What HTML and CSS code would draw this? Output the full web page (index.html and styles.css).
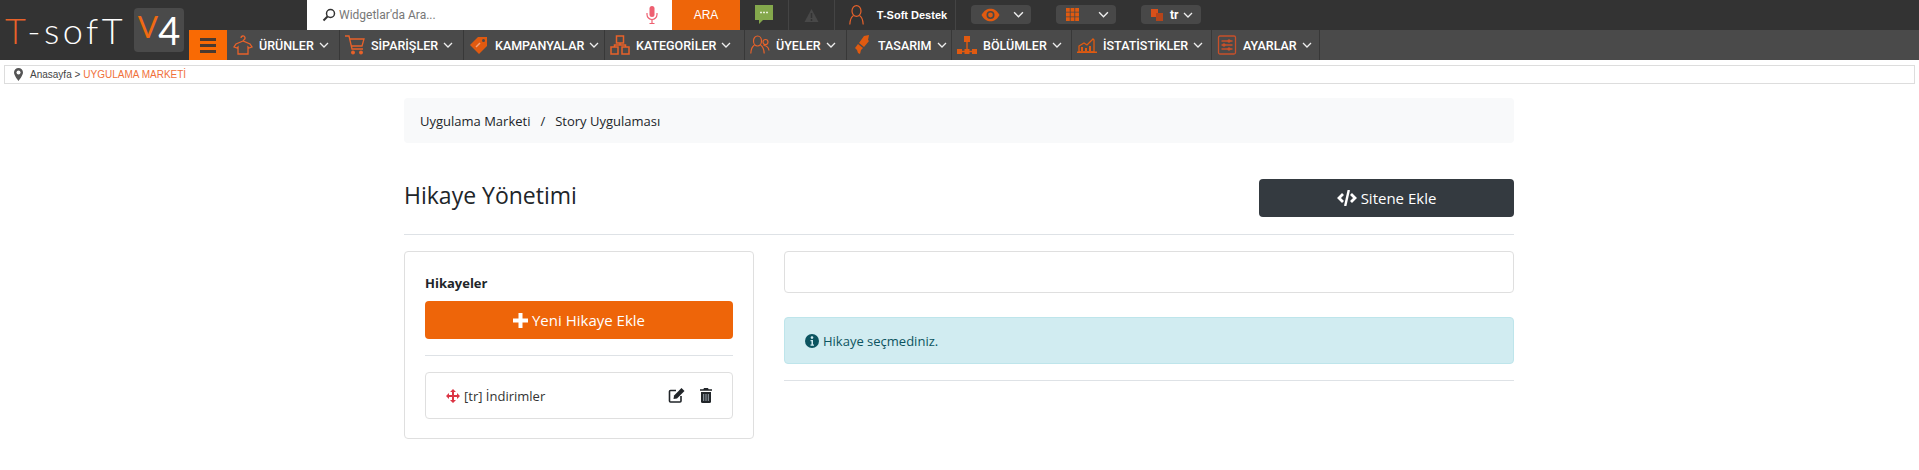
FILE: index.html
```html
<!DOCTYPE html>
<html lang="en">
<head>
  <meta charset="UTF-8" />
  <title>T-Soft V4 - Hikaye Yönetimi</title>
  <link rel="stylesheet" href="styles.css">
</head>
<body>
  <header class="header">
    <div class="logo">
      <div class="logo-text"><span class="logo-t">T</span>-sofT</div>
      <div class="logo-box"><span class="logo-v">V</span><span class="logo-4">4</span></div>
    </div>
    <div class="header-right">
      <div class="top-bar">
        <div class="search">
          <svg class="search-icon" viewBox="0 0 14 14"><circle cx="8.5" cy="5.5" r="4" fill="none" stroke="#333" stroke-width="1.5"/><path d="M5.5 8.5L1.5 12.5" stroke="#333" stroke-width="2"/></svg>
          <span class="search-text">Widgetlar'da Ara...</span>
          <svg class="mic" viewBox="0 0 12 18"><rect x="3.5" y="0" width="5" height="11" rx="2.5" fill="#ee5f70"/><path d="M1 7v1.5a5 5 0 0 0 10 0V7M6 13.5V18M3.500 17.500h5" fill="none" stroke="#ee5f70" stroke-width="1.2"/></svg>
        </div>
        <div class="search-btn">ARA</div>
        <div class="top-cell chat">
          <svg width="18" height="20" viewBox="0 0 18 20"><path d="M0 0h18v15H8l-4 4v-4H0z" fill="#84a84c"/><path d="M5 7.500h2M8 7.500h2M11 7.500h2" stroke="#e8f0d8" stroke-width="1.6"/></svg>
        </div>
        <div class="top-cell alert-cell">
          <svg width="15" height="15" viewBox="0 0 15 15"><path d="M7.500 1L14.500 14H.5z" fill="#484848"/><path d="M7.500 5v5M7.500 11v2" stroke="#333" stroke-width="1.5"/></svg>
        </div>
        <div class="top-cell support">
          <svg width="15" height="20" viewBox="0 0 15 20" fill="none" stroke="#e8622a" stroke-width="1.2"><ellipse cx="7.500" cy="6" rx="4.500" ry="5.400"/><path d="M4.500 10.500C2 12 1 15 .8 19.500M10.500 10.500C13 12 14 15 14.200 19.500"/></svg>
          <span>T-Soft Destek</span>
        </div>
        <div class="pills">
          <div class="pill">
            <svg width="19" height="14" viewBox="0 0 19 14"><path d="M.5 7C3 2.500 6 .7 9.500.7S16 2.500 18.500 7C16 11.500 13 13.300 9.500 13.300S3 11.500 .5 7z" fill="#e05a10"/><circle cx="9.500" cy="7" r="4" fill="#484848"/><circle cx="9.500" cy="7" r="2.400" fill="#e05a10"/></svg>
            <svg class="chev chev-pill" viewBox="0 0 10 6"><path d="M1 1l4 4 4-4"/></svg>
          </div>
          <div class="pill">
            <svg width="13" height="13" viewBox="0 0 13 13" fill="#e05a10"><path d="M0 0h3.800v3.800H0zM4.600 0h3.800v3.800H4.600zM9.200 0H13v3.800H9.200zM0 4.600h3.800v3.800H0zM4.600 4.600h3.800v3.800H4.600zM9.200 4.600H13v3.800H9.200zM0 9.200h3.800V13H0zM4.600 9.200h3.800V13H4.600zM9.200 9.200H13V13H9.200z"/></svg>
            <svg class="chev chev-pill" viewBox="0 0 10 6"><path d="M1 1l4 4 4-4"/></svg>
          </div>
          <div class="pill pill-lang">
            <svg width="12" height="12" viewBox="0 0 12 12"><rect x="0" y="0" width="7" height="8" fill="#d8501a"/><rect x="5" y="4" width="7" height="8" fill="#b4441a"/></svg>
            <span class="lang">tr</span>
            <svg class="chev chev-lang" viewBox="0 0 10 6"><path d="M1 1l4 4 4-4"/></svg>
          </div>
        </div>
      </div>

      <nav class="menu">
        <div class="menu-toggle"><span></span><span></span><span></span></div>
        <a class="menu-item" href="#">
          <svg class="menu-icon" viewBox="0 0 20 20" fill="none" stroke="#e8622a" stroke-width="1.3"><path d="M8 3a2 2 0 1 1 3 1.700L10 6M10 6L3 9l-2 3 3 1 1-1v7h10v-7l1 1 3-1-2-3z"/></svg>
          <span>ÜRÜNLER</span><svg class="chev" viewBox="0 0 10 6"><path d="M1 1l4 4 4-4"/></svg>
        </a>
        <a class="menu-item" href="#">
          <svg class="menu-icon" viewBox="0 0 20 20" fill="none" stroke="#e8622a" stroke-width="1.3"><path d="M0 1h4l3 13h11M5 4h14l-2 7H6.500"/><circle cx="8" cy="17.500" r="1.300" fill="#e8622a"/><circle cx="16" cy="17.500" r="1.300" fill="#e8622a"/></svg>
          <span>SİPARİŞLER</span><svg class="chev" viewBox="0 0 10 6"><path d="M1 1l4 4 4-4"/></svg>
        </a>
        <a class="menu-item" href="#">
          <svg class="menu-icon" viewBox="0 0 20 20"><path d="M9 2h9v9l-8 8-9-9z" fill="#e05a10"/><circle cx="14.500" cy="5.500" r="1.500" fill="#4a4a4a"/><path d="M7 12l4-4" stroke="#f3a37a" stroke-width="1.500"/></svg>
          <span>KAMPANYALAR</span><svg class="chev" viewBox="0 0 10 6"><path d="M1 1l4 4 4-4"/></svg>
        </a>
        <a class="menu-item" href="#">
          <svg class="menu-icon" viewBox="0 0 20 20" fill="none" stroke="#e8622a" stroke-width="1.500"><rect x="6.500" y="1" width="7" height="7"/><rect x="1" y="12" width="7" height="7"/><rect x="12" y="12" width="7" height="7"/><path d="M10 8v2M4.500 12v-2h11v2"/></svg>
          <span>KATEGORİLER</span><svg class="chev" viewBox="0 0 10 6"><path d="M1 1l4 4 4-4"/></svg>
        </a>
        <a class="menu-item" href="#">
          <svg class="menu-icon" viewBox="0 0 20 20" fill="none" stroke="#e8622a" stroke-width="1.200"><ellipse cx="7.500" cy="6" rx="4" ry="5"/><path d="M4.500 10C2 11.500 1 14.500 .8 18.500M10.500 10C13 11.500 14 14.500 14.200 18.500"/><circle cx="15.500" cy="7" r="2.500"/><path d="M13.500 10.500c3 0 5 2 5.500 5"/></svg>
          <span>ÜYELER</span><svg class="chev" viewBox="0 0 10 6"><path d="M1 1l4 4 4-4"/></svg>
        </a>
        <a class="menu-item" href="#">
          <svg class="menu-icon" viewBox="0 0 20 20"><path d="M12 1l5-1-1 5 1 1-5 6-5-4z" fill="#e05a10"/><path d="M6 9l5 4-2 2-1 4-2-1-1-3-2-2z" fill="#e05a10"/></svg>
          <span>TASARIM</span><svg class="chev" viewBox="0 0 10 6"><path d="M1 1l4 4 4-4"/></svg>
        </a>
        <a class="menu-item" href="#">
          <svg class="menu-icon" viewBox="0 0 20 20" fill="#e05a10"><rect x="7" y="1" width="6" height="6"/><rect x="0" y="14" width="5" height="5"/><rect x="7.500" y="14" width="5" height="5"/><rect x="15" y="14" width="5" height="5"/><path d="M9.300 7h1.400v9H9.300zM3 15.800h14v1.400H3z"/></svg>
          <span>BÖLÜMLER</span><svg class="chev" viewBox="0 0 10 6"><path d="M1 1l4 4 4-4"/></svg>
        </a>
        <a class="menu-item" href="#">
          <svg class="menu-icon" viewBox="0 0 20 20"><path d="M2 11l5-3 3 2 6-6 1 1v12H2z" fill="none" stroke="#e05a10" stroke-width="1.300"/><path d="M4 12h2v4H4zM8 13h2v3H8zM12 11h2v5h-2z" fill="#e05a10"/><path d="M0 16.500h20V18H0z" fill="#e05a10"/></svg>
          <span>İSTATİSTİKLER</span><svg class="chev" viewBox="0 0 10 6"><path d="M1 1l4 4 4-4"/></svg>
        </a>
        <a class="menu-item" href="#">
          <svg class="menu-icon" viewBox="0 0 20 20" fill="none" stroke="#c8502a" stroke-width="1.300"><rect x="1.500" y="1" width="17" height="18" rx="1.500"/><path d="M4.500 6h11M4.500 10h11M4.500 14h11"/><circle cx="12" cy="6" r="1" fill="#c8502a"/><circle cx="7" cy="10" r="1" fill="#c8502a"/><circle cx="12" cy="14" r="1" fill="#c8502a"/></svg>
          <span>AYARLAR</span><svg class="chev" viewBox="0 0 10 6"><path d="M1 1l4 4 4-4"/></svg>
        </a>
      </nav>
    </div>
  </header>

  <div class="crumb-bar">
    <svg width="9" height="13" viewBox="0 0 9 13"><path d="M4.500 0A4.500 4.500 0 0 0 0 4.500C0 7.500 4.500 13 4.500 13S9 7.500 9 4.500A4.500 4.500 0 0 0 4.500 0z" fill="#555"/><circle cx="4.500" cy="4.500" r="2" fill="#fff"/></svg>
    <span class="crumb-home">Anasayfa &gt;</span>
    <span class="crumb-current">UYGULAMA MARKETİ</span>
  </div>

  <main class="container">
    <div class="breadcrumb">
      <a href="#">Uygulama Marketi</a><span class="sep">/</span><a href="#">Story Uygulaması</a>
    </div>

    <div class="page-head">
      <h1>Hikaye Yönetimi</h1>
      <button class="btn btn-dark">
        <svg width="20" height="16" viewBox="0 0 20 16" fill="none" stroke="#fff"><path d="M11.800 0L8.200 16" stroke-width="2.400"/><path d="M6 4L2 8l4 4M14 4l4 4-4 4" stroke-width="2.800"/></svg>
        Sitene Ekle
      </button>
    </div>

    <div class="columns">
      <section class="card stories">
        <div class="card-title">Hikayeler</div>
        <button class="btn btn-orange">
          <svg width="15" height="15" viewBox="0 0 15 15" fill="#fff"><path d="M5.500 0h4v5.500H15v4H9.500V15h-4V9.500H0v-4h5.500z"/></svg>
          Yeni Hikaye Ekle
        </button>
        <hr class="rule">
        <div class="story-row">
          <svg class="move" width="14" height="14" viewBox="0 0 14 14" fill="#dc3545"><path d="M7 0l3 3H8v3h3V4l3 3-3 3V8H8v3h2l-3 3-3-3h2V8H3v2L0 7l3-3v2h3V3H4z"/></svg>
          <span class="story-name">[tr] İndirimler</span>
          <div class="story-actions">
            <svg width="17" height="15" viewBox="0 0 17 15"><path d="M8 2.500H2.500a1 1 0 0 0-1 1v9.500a1 1 0 0 0 1 1H12a1 1 0 0 0 1-1V8" fill="none" stroke="#212529" stroke-width="1.600"/><path d="M13.500 0L16.500 3 9 10.500l-3.500.6.600-3.600z" fill="#212529"/></svg>
            <svg width="12" height="15" viewBox="0 0 12 15"><path d="M4 0h4l.6 1.200H12v1.600H0V1.200h3.400z" fill="#212529"/><path d="M1 4h10v9.500A1.500 1.500 0 0 1 9.500 15h-7A1.500 1.500 0 0 1 1 13.500z" fill="#212529"/><path d="M3.700 6v7M6 6v7M8.300 6v7" stroke="#9aa4ad" stroke-width="1"/></svg>
          </div>
        </div>
      </section>

      <section class="detail">
        <div class="card empty-card"></div>
        <div class="alert-info">
          <svg width="14" height="14" viewBox="0 0 14 14"><circle cx="7" cy="7" r="7" fill="#0c5460"/><circle cx="7" cy="3.600" r="1.300" fill="#d1ecf1"/><path d="M5.500 6h2.500v4.500h1v1.200H5.500v-1.200h1V7.200h-1z" fill="#d1ecf1"/></svg>
          Hikaye seçmediniz.
        </div>
        <hr class="rule rule-detail">
      </section>
    </div>
  </main>
</body>
</html>
```

FILE: styles.css
```css
* { box-sizing: border-box; }
body { margin: 0; background: #fff; color: #212529; font-family: "Open Sans", "Noto Sans", sans-serif; font-size: 13px; overflow: hidden; }
a { color: inherit; text-decoration: none; }

/* header */
.header { display: flex; height: 60px; background: #333; }
.logo { display: flex; width: 189px; flex: none; align-items: center; padding: 8px 5px 8px 5px; justify-content: space-between; }
.logo-text { font-family: Lato, sans-serif; font-weight: 300; font-size: 36px; letter-spacing: 3.500px; color: #fff; line-height: 44px; white-space: nowrap; }
.logo-t { color: #e8622a; }
.logo-box { display: flex; justify-content: center; align-items: flex-end; width: 50px; height: 44px; padding-bottom: 3px; background: #4a4a4a; border-radius: 4px; flex: none; font-family: Lato, sans-serif; }
.logo-v { font-weight: 400; font-size: 30px; line-height: 36px; margin-bottom: 5px; color: #f06a12; }
.logo-4 { font-weight: 400; font-size: 38px; line-height: 38px; color: #fff; }

.header-right { flex: 1; min-width: 0; display: flex; flex-direction: column; }
.top-bar { display: flex; height: 30px; margin-left: 118px; }
.search { width: 365px; background: #fff; display: flex; align-items: center; padding-left: 15px; font-family: Roboto, sans-serif; font-size: 12px; color: #777; }
.search-icon { width: 14px; height: 14px; margin-right: 3px; flex: none; }
.search-text { flex: 1; }
.mic { width: 12px; height: 18px; margin-right: 14px; }
.search-btn { width: 68px; background: #ee6509; color: #fff; font-family: "Liberation Sans", sans-serif; font-size: 12px; display: flex; align-items: center; justify-content: center; }
.top-cell { display: flex; align-items: center; justify-content: center; height: 30px; border-right: 1px solid #444; }
.chat { width: 49px; }
.alert-cell { width: 46px; }
.support { width: 121px; gap: 13px; padding-left: 6px; color: #fff; font-family: "Liberation Sans", sans-serif; font-weight: 700; font-size: 11px; }
.pills { display: flex; gap: 25px; margin-left: 15px; padding-top: 5px; }
.pill { width: 60px; height: 19px; background: #484848; border-radius: 4px; display: flex; align-items: center; justify-content: space-between; padding: 0 7px 0 10px; }
.pill-lang { padding: 0 5px 0 10px; justify-content: flex-start; }
.lang { color: #fff; font-family: Roboto, sans-serif; font-weight: 700; font-size: 12px; margin-left: 7px; }
.chev { width: 10px; height: 6px; flex: none; fill: none; stroke: #eee; stroke-width: 1.300; }
.chev-pill { width: 11px; height: 7px; }
.chev-lang { margin-left: 5px; }

.menu { display: grid; grid-template-columns: 39px 112px 124px 141px 140px 102px 105px 120px 140px 108px; justify-content: start; height: 30px; background: #4a4a4a; }
.menu-toggle { width: 38px; background: #f96a04; display: flex; flex-direction: column; justify-content: center; gap: 3px; padding: 0 11px; }
.menu-toggle span { display: block; height: 3px; background: #4a3a30; }
.menu-item { display: flex; align-items: center; padding: 0 0 0 5px; border-right: 1px solid #383838; color: #fff; font-family: Roboto, sans-serif; font-weight: 500; font-size: 12.500px; white-space: nowrap; }
.menu-icon { width: 20px; height: 20px; margin-right: 6px; flex: none; }
.menu-item .chev { margin-left: 5px; }

.crumb-bar { display: flex; align-items: center; height: 19px; margin: 5px 4px 0; border: 1px solid #ddd; padding-left: 9px; font-family: "Liberation Sans", sans-serif; font-size: 10px; color: #444; }
.crumb-bar svg { margin-right: 7px; }
.crumb-current { color: #f0703a; margin-left: 3px; }

/* content */
.container { width: 1110px; margin: 14px 0 0 404px; }
.breadcrumb { display: flex; align-items: center; height: 45px; background: #f8f9fa; border-radius: 4px; padding-left: 16px; }
.sep { margin: 0 10px; }
.page-head { display: flex; justify-content: space-between; align-items: center; height: 92px; padding-top: 19px; border-bottom: 1px solid #dee2e6; }
h1 { margin: 0 0 7px; font-size: 23px; font-weight: 500; color: #212529; }
.btn { display: flex; align-items: center; justify-content: center; gap: 4px; height: 38px; border: none; border-radius: 4px; color: #fff; font-family: inherit; font-size: 15px; }
.btn-dark { width: 255px; background: #343a40; }
.btn-orange { width: 100%; background: #ee6509; }

.columns { display: flex; gap: 30px; margin-top: 16px; }
.card { border: 1px solid #dfdfdf; border-radius: 4px; background: #fff; }
.stories { width: 350px; height: 188px; padding: 20px; flex: none; }
.card-title { font-weight: 700; font-size: 13px; line-height: 22px; margin-bottom: 7px; }
.rule { border: 0; border-top: 1px solid #dee2e6; margin: 16px 0; }
.story-row { display: flex; align-items: center; height: 47px; border: 1px solid #dfdfdf; border-radius: 4px; padding: 0 20px; color: #333; }
.move { margin-right: 4px; }
.story-name { flex: 1; }
.story-actions { display: flex; align-items: center; gap: 15px; }

.detail { flex: 1; min-width: 0; }
.empty-card { height: 42px; }
.alert-info { display: flex; align-items: center; gap: 4px; height: 47px; margin-top: 24px; background: #d1ecf1; border: 1px solid #bee5eb; border-radius: 4px; padding-left: 20px; color: #0c5460; }
.rule-detail { margin: 16px 0 0; }
```
